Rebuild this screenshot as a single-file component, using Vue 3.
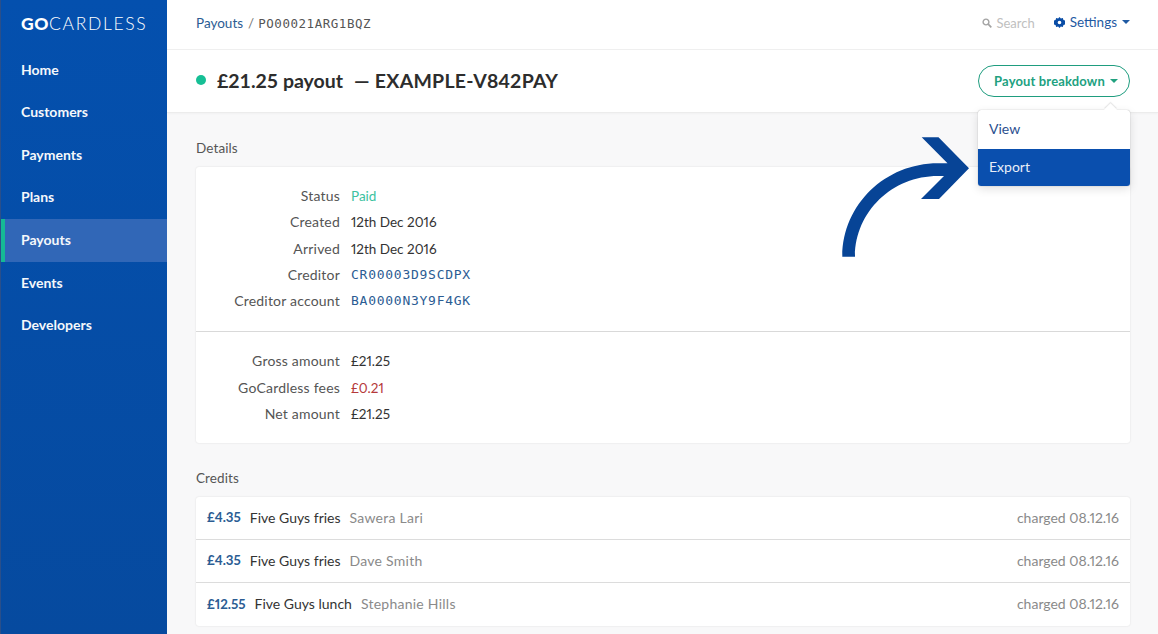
<script setup>
const nav = ['Home', 'Customers', 'Payments', 'Plans', 'Payouts', 'Events', 'Developers']
const details = [
  { label: 'Status', value: 'Paid', cls: 'paid' },
  { label: 'Created', value: '12th Dec 2016' },
  { label: 'Arrived', value: '12th Dec 2016' },
  { label: 'Creditor', value: 'CR00003D9SCDPX', cls: 'mono' },
  { label: 'Creditor account', value: 'BA0000N3Y9F4GK', cls: 'mono' },
]
const amounts = [
  { label: 'Gross amount', value: '£21.25' },
  { label: 'GoCardless fees', value: '£0.21', cls: 'fee' },
  { label: 'Net amount', value: '£21.25' },
]
const credits = [
  { amount: '£4.35', name: 'Five Guys fries', who: 'Sawera Lari' },
  { amount: '£4.35', name: 'Five Guys fries', who: 'Dave Smith' },
  { amount: '£12.55', name: 'Five Guys lunch', who: 'Stephanie Hills' },
]
</script>

<template>
  <div class="app">
    <aside class="sidebar">
      <div class="logo"><b>GO</b>CARDLESS</div>
      <nav class="nav">
        <a v-for="n in nav" :key="n" class="nav-item" :class="{ active: n === 'Payouts' }">{{ n }}</a>
      </nav>
    </aside>
    <main class="main">
      <header class="topbar">
        <div class="crumbs">
          <a class="link">Payouts</a>
          <span class="sep">/</span>
          <span class="crumb-id">PO00021ARG1BQZ</span>
        </div>
        <div class="top-right">
          <span class="search">
            <svg width="10" height="10" viewBox="0 0 10 10" class="search-ic">
              <circle cx="4" cy="4" r="2.9" fill="none" stroke="#a3a3a3" stroke-width="1.4" />
              <path d="M6.2 6.2 9.3 9.3" stroke="#a3a3a3" stroke-width="1.7" />
            </svg>
            Search
          </span>
          <span class="settings">
            <svg width="11" height="11" viewBox="0 0 24 24" class="gear">
              <path fill="#0a4da6" fill-rule="evenodd" d="M12 0l3 3.2 4.3-1 1.3 4.3 4.3 1.3-1 4.2 1 4.2-4.3 1.3-1.3 4.3-4.3-1L12 24l-3-3.2-4.3 1-1.3-4.3L-.9 16.2l1-4.2-1-4.2 4.3-1.3 1.3-4.3 4.3 1zM12 8a4 4 0 100 8 4 4 0 000-8z" />
            </svg>
            Settings
            <i class="caret blue"></i>
          </span>
        </div>
      </header>

      <section class="titlebar">
        <h1 class="title">
          <i class="dot"></i>
          <span>£21.25 payout</span>
          <span class="ref">— EXAMPLE-V842PAY</span>
        </h1>
        <div class="menu-wrap">
          <button class="breakdown">Payout breakdown <i class="caret green"></i></button>
          <div class="menu">
            <i class="menu-tip"></i>
            <a class="menu-item">View</a>
            <a class="menu-item on">Export</a>
          </div>
        </div>
      </section>

      <div class="content">
        <h2 class="section-label">Details</h2>
        <div class="card">
          <dl class="rows top">
            <div v-for="r in details" :key="r.label" class="row">
              <dt>{{ r.label }}</dt>
              <dd :class="r.cls">{{ r.value }}</dd>
            </div>
          </dl>
          <dl class="rows bottom">
            <div v-for="r in amounts" :key="r.label" class="row">
              <dt>{{ r.label }}</dt>
              <dd :class="r.cls">{{ r.value }}</dd>
            </div>
          </dl>
        </div>

        <h2 class="section-label">Credits</h2>
        <ul class="card credits">
          <li v-for="c in credits" :key="c.who" class="credit">
            <b class="amount">{{ c.amount }}</b>
            <span class="name">{{ c.name }}</span>
            <span class="who">{{ c.who }}</span>
            <span class="charged">charged 08.12.16</span>
          </li>
        </ul>
      </div>
    </main>

    <svg class="arrow" width="130" height="122" viewBox="840 136 130 122">
      <path fill="#074496" d="M921.7 137.3H938.5L969 168.3 939 199H921L944 176H938C892 176 855 212 855 256.7H842.3C842.3 205 885 163.3 938 163.3H947.5Z" />
    </svg>
  </div>
</template>

<style>
html, body { margin: 0; }
</style>

<style scoped>
.app {
  position: relative;
  display: flex;
  width: 1158px;
  height: 634px;
  overflow: hidden;
  background: #f8f8f9;
  font-family: Lato, "Noto Sans", sans-serif;
  font-size: 14px;
  color: #333;
  font-variant-numeric: proportional-nums;
}
.sidebar {
  flex: 0 0 167px;
  background: linear-gradient(180deg, #0450ae 0%, #064a9f 100%);
  border-left: 1px solid #2a4f8a;
  box-sizing: border-box;
}
.logo {
  height: 48.7px;
  padding: 14px 0 0 20px;
  box-sizing: border-box;
  color: #fff;
  font-size: 17.5px;
  line-height: 20px;
  letter-spacing: 1.65px;
  font-weight: 300;
  white-space: nowrap;
}
.logo b { font-weight: 900; letter-spacing: .6px; }
.nav { display: flex; flex-direction: column; }
.nav-item {
  height: 42.6px;
  line-height: 42.6px;
  padding-left: 20px;
  color: #fff;
  font-weight: 700;
  font-size: 14px;
  opacity: .96;
  box-sizing: border-box;
}
.nav-item.active {
  background: #3369b8;
  border-left: 4px solid #16bf95;
  padding-left: 16px;
}
.main { flex: 1; min-width: 0; display: flex; flex-direction: column; }
.topbar {
  height: 50px;
  flex: none;
  box-sizing: border-box;
  background: #fff;
  border-bottom: 1px solid #efefef;
  display: flex;
  align-items: center;
  justify-content: space-between;
  padding: 0 28px 3px 29px;
  font-size: 13.5px;
}
.crumbs { display: flex; align-items: center; gap: 5px; }
.link { color: #2b5c93; }
.sep { color: #777; }
.crumb-id { font-family: "DejaVu Sans Mono", monospace; font-size: 12.5px; color: #555; letter-spacing: .54px; margin-left: -1px; }
.top-right { display: flex; align-items: center; gap: 19px; }
.search { color: #c0c0c0; display: flex; align-items: center; gap: 4px; font-size: 13px; }
.settings { color: #1f5aa3; display: flex; align-items: center; gap: 5px; margin-top: -2px; }
.caret {
  display: inline-block;
  width: 0;
  height: 0;
  border-left: 4px solid transparent;
  border-right: 4px solid transparent;
  border-top: 4px solid currentColor;
}
.titlebar {
  height: 63px;
  flex: none;
  box-sizing: border-box;
  background: #fff;
  border-bottom: 1px solid #ececec;
  box-shadow: 0 1px 2px rgba(0, 0, 0, .03);
  display: flex;
  align-items: center;
  justify-content: space-between;
  padding: 0 28px 0 29px;
}
.title {
  margin: 0 0 2px;
  display: flex;
  align-items: center;
  font-size: 19.5px;
  font-weight: 700;
  color: #2d2d2d;
  font-variant-numeric: normal;
}
.dot { width: 10px; height: 10px; border-radius: 50%; background: #16bf95; margin-right: 11px; }
.ref { margin-left: 11px; letter-spacing: .25px; }
.menu-wrap { position: relative; }
.breakdown {
  width: 152px;
  height: 32px;
  padding: 0 0 0 4px;
  border: 1px solid #1f9d7f;
  border-radius: 16px;
  background: #fff;
  color: #21a17f;
  font: 700 13px Lato, "Noto Sans", sans-serif;
  letter-spacing: .15px;
  display: flex;
  align-items: center;
  justify-content: center;
  gap: 5px;
  box-sizing: border-box;
}
.caret.green { color: #21a17f; }
.caret.blue { color: #1f5aa3; }
.menu {
  position: absolute;
  top: 45px;
  right: 0;
  width: 152px;
  background: #fff;
  border-radius: 3px;
  box-shadow: 0 0 1px rgba(0, 0, 0, .4), 0 3px 10px rgba(0, 0, 0, .12);
  z-index: 3;
}
.menu-tip {
  position: absolute;
  top: -5px;
  right: 15px;
  width: 9px;
  height: 9px;
  background: #fff;
  transform: rotate(45deg);
  box-shadow: -1px -1px 1px rgba(0, 0, 0, .1);
}
.menu-item {
  position: relative;
  display: block;
  height: 39px;
  line-height: 38px;
  padding-left: 11px;
  color: #2b4f8f;
  font-size: 14px;
}
.menu-item.on {
  height: 37px;
  line-height: 36px;
  background: #0a4fae;
  color: #e8eef8;
  border-radius: 0 0 3px 3px;
}
.content { padding: 0 28px 0 29px; }
.section-label {
  margin: 25px 0 9px;
  font-size: 13.5px;
  font-weight: 400;
  color: #555;
  line-height: 20px;
  letter-spacing: .1px;
}
.card {
  background: #fff;
  border-radius: 3px;
  box-shadow: 0 0 2px rgba(0, 0, 0, .12);
}
.rows { margin: 0; padding: 0; }
.rows.top { padding: 16px 0 17px; border-bottom: 1px solid #d9d9d9; }
.rows.bottom { padding: 16px 0; }
.row { display: flex; height: 26.3px; line-height: 26.3px; }
dt { width: 144px; text-align: right; color: #555; font-size: 14px; letter-spacing: .2px; }
dd { margin: 0 0 0 11px; color: #333; font-size: 13.5px; }
dd.paid { color: #3cc2a0; }
dd.fee { color: #b5393a; }
dd.mono { font-family: "DejaVu Sans Mono", monospace; color: #2b5c93; font-size: 13px; letter-spacing: .74px; }
.credits { list-style: none; margin: 0; padding: 0; }
.credit {
  display: flex;
  align-items: center;
  height: 43px;
  box-sizing: border-box;
  padding: 0 11px 2px;
  border-bottom: 1px solid #dcdcdc;
  gap: 9px;
}
.credit:last-child { border-bottom: 0; }
.amount { color: #2b5c93; font-weight: 700; font-size: 13.3px; }
.name { color: #333; }
.who { color: #8a8a8a; letter-spacing: .25px; }
.charged { margin-left: auto; color: #8a8a8a; }
.arrow { position: absolute; left: 840px; top: 136px; z-index: 4; }
</style>
